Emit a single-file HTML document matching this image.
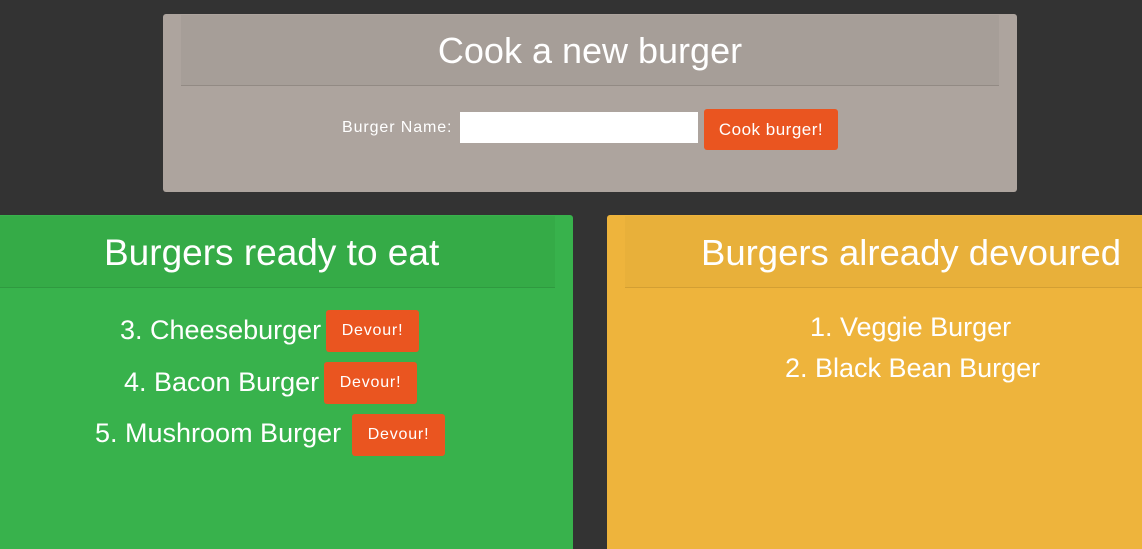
<!DOCTYPE html>
<html><head><style>
body{margin:0;width:1142px;height:549px;background:#333;overflow:hidden;position:relative;font-family:"Liberation Sans",sans-serif;color:#fff}
.a{position:absolute}
.btn{position:absolute;background:#ea5520;border-radius:3px;color:#fff;font-size:16px;letter-spacing:0.8px;text-align:center}
.it{position:absolute;font-size:27px;white-space:nowrap}
</style></head><body>
<div class="a" style="left:163px;top:14px;width:854px;height:178px;background:#ada49e;border-radius:3px"></div>
<div class="a" style="left:181px;top:15px;width:818px;height:70px;background:#a69e98;border-bottom:1px solid #928a84"></div>
<div class="a" style="left:181px;top:30px;width:818px;text-align:center;font-size:36px">Cook a new burger</div>
<div class="a" style="left:342px;top:119px;font-size:16px;letter-spacing:0.9px">Burger Name:</div>
<div class="a" style="left:460px;top:112px;width:238px;height:31px;background:#fff"></div>
<div class="btn" style="left:704px;top:109px;width:134px;height:41px;line-height:41px;font-size:17px;letter-spacing:0.5px">Cook burger!</div>

<div class="a" style="left:0;top:215px;width:573px;height:334px;background:#38b24c;border-radius:0 3px 0 0"></div>
<div class="a" style="left:0;top:216px;width:555px;height:71px;background:#35ab47;border-bottom:1px solid #2f9a40"></div>
<div class="a" style="left:104px;top:232px;font-size:37px;white-space:nowrap">Burgers ready to eat</div>
<div class="it" style="left:120px;top:315px">3. Cheeseburger</div>
<div class="btn" style="left:326px;top:310px;width:93px;height:42px;line-height:42px">Devour!</div>
<div class="it" style="left:124px;top:367px">4. Bacon Burger</div>
<div class="btn" style="left:324px;top:362px;width:93px;height:42px;line-height:42px">Devour!</div>
<div class="it" style="left:95px;top:418px">5. Mushroom Burger</div>
<div class="btn" style="left:352px;top:414px;width:93px;height:42px;line-height:42px">Devour!</div>

<div class="a" style="left:607px;top:215px;width:535px;height:334px;background:#eeb43c;border-radius:3px 0 0 0"></div>
<div class="a" style="left:625px;top:216px;width:517px;height:71px;background:#e8b03a;border-bottom:1px solid #d39f33"></div>
<div class="a" style="left:701px;top:232px;font-size:36.5px;white-space:nowrap">Burgers already devoured</div>
<div class="it" style="left:810px;top:312px">1. Veggie Burger</div>
<div class="it" style="left:785px;top:353px">2. Black Bean Burger</div>
</body></html>
